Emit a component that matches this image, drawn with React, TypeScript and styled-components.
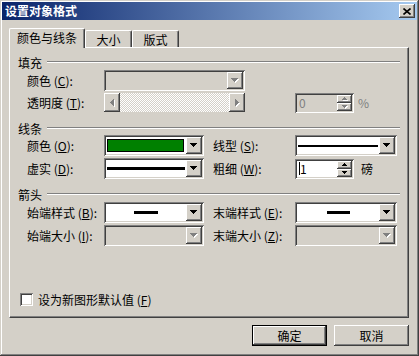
import React from "react";
import styled, { createGlobalStyle, css } from "styled-components";

const FACE = "#d4d0c8";
const SHADOW = "#808080";
const DARK = "#404040";

const GlobalStyle = createGlobalStyle`
  * { box-sizing: border-box; }
  html, body { margin: 0; padding: 0; background: ${FACE}; }
  body {
    font-family: "Noto Sans CJK SC", "Liberation Sans", sans-serif;
    font-size: 12px;
    color: #000;
  }
  u { text-underline-offset: 1px; }
`;

const raised = css`
  box-shadow: inset -1px -1px ${DARK}, inset 1px 1px #fff,
    inset -2px -2px ${SHADOW}, inset 2px 2px ${FACE};
`;

const sunken = css`
  box-shadow: inset 1px 1px ${SHADOW}, inset -1px -1px #fff,
    inset 2px 2px ${DARK}, inset -2px -2px ${FACE};
`;

const Window = styled.div`
  width: 419px;
  height: 356px;
  padding: 2px;
  display: flex;
  flex-direction: column;
  background: ${FACE};
  box-shadow: inset -1px -1px ${DARK}, inset 1px 1px ${FACE},
    inset -2px -2px ${SHADOW}, inset 2px 2px #fff;
`;

const TitleBar = styled.div`
  height: 18px;
  display: flex;
  align-items: center;
  justify-content: space-between;
  padding: 0 2px 0 3px;
  background: linear-gradient(to right, #0a246a, #a6caf0);
  color: #fff;
  font-weight: bold;
  line-height: 18px;
`;

const CloseButton = styled.div`
  width: 16px;
  height: 14px;
  display: flex;
  align-items: center;
  justify-content: center;
  background: ${FACE};
  ${raised};
`;

const Body = styled.div`
  flex: 1;
  display: flex;
  flex-direction: column;
  padding: 8px 8px 0 7px;
`;

const TabRow = styled.div`
  height: 19px;
  display: flex;
  align-items: flex-end;
  position: relative;
  z-index: 1;
`;

const Tab = styled.div<{ $active?: boolean; $w: number }>`
  width: ${(p) => p.$w}px;
  height: ${(p) => (p.$active ? 20 : 17)}px;
  margin-bottom: ${(p) => (p.$active ? -1 : 0)}px;
  display: flex;
  align-items: center;
  justify-content: center;
  padding-bottom: ${(p) => (p.$active ? 2 : 0)}px;
  background: ${FACE};
  border-top: 1px solid #fff;
  border-left: 1px solid #fff;
  border-right: 1px solid ${DARK};
  border-radius: 2px 2px 0 0;
  box-shadow: inset -1px 0 ${SHADOW};
`;

const Panel = styled.div`
  height: 271px;
  display: flex;
  flex-direction: column;
  padding: 8px 8px 11px 8px;
  border-top: 1px solid #fff;
  border-left: 1px solid #fff;
  border-right: 1px solid ${DARK};
  border-bottom: 1px solid ${DARK};
  box-shadow: inset -1px -1px ${SHADOW};
`;

const GroupHeader = styled.div<{ $top: number }>`
  height: 12px;
  margin-top: ${(p) => p.$top}px;
  display: flex;
  align-items: center;
  gap: 5px;
`;

const Etch = styled.div`
  flex: 1;
  height: 2px;
  border-top: 1px solid ${SHADOW};
  border-bottom: 1px solid #fff;
`;

const Row = styled.div<{ $top: number }>`
  height: 21px;
  margin-top: ${(p) => p.$top}px;
  padding-left: 9px;
  display: flex;
  align-items: center;
`;

const Label = styled.div<{ $w: number; $gap?: number }>`
  width: ${(p) => p.$w}px;
  margin-left: ${(p) => p.$gap ?? 0}px;
  flex: none;
  white-space: nowrap;
`;

const Combo = styled.div<{ $w: number; $disabled?: boolean }>`
  width: ${(p) => p.$w}px;
  height: 21px;
  flex: none;
  display: flex;
  padding: 2px;
  background: ${(p) => (p.$disabled ? FACE : "#fff")};
  ${sunken};
`;

const ComboField = styled.div`
  flex: 1;
  display: flex;
  align-items: center;
  justify-content: center;
  padding: 0 1px;
`;

const DropButton = styled.div`
  width: 16px;
  flex: none;
  display: flex;
  align-items: center;
  justify-content: center;
  background: ${FACE};
  ${raised};
`;

const Swatch = styled.div<{ $color: string }>`
  align-self: stretch;
  flex: 1;
  margin: 2px 1px 2px 0;
  background: ${(p) => p.$color};
  border: 1px solid #000;
`;

const LineSample = styled.div<{ $w?: number; $thick: number }>`
  width: ${(p) => (p.$w ? `${p.$w}px` : "100%")};
  height: ${(p) => p.$thick}px;
  background: #000;
`;

const ScrollBar = styled.div<{ $w: number }>`
  width: ${(p) => p.$w}px;
  height: 19px;
  flex: none;
  display: flex;
  justify-content: space-between;
  background: repeating-conic-gradient(#fff 0 25%, ${FACE} 0 50%) 0 0 / 2px
    2px;
`;

const ScrollButton = styled.div`
  width: 16px;
  display: flex;
  align-items: center;
  justify-content: center;
  background: ${FACE};
  ${raised};
`;

const Spin = styled.div<{ $disabled?: boolean; $gap?: number }>`
  width: 59px;
  height: 20px;
  flex: none;
  margin-left: ${(p) => p.$gap ?? 0}px;
  display: flex;
  padding: 2px;
  background: ${(p) => (p.$disabled ? FACE : "#fff")};
  ${sunken};
`;

const SpinText = styled.div<{ $disabled?: boolean }>`
  flex: 1;
  display: flex;
  align-items: center;
  padding-left: 2px;
  color: ${(p) => (p.$disabled ? SHADOW : "#000")};
`;

const Caret = styled.span`
  width: 1px;
  height: 13px;
  background: #000;
`;

const SpinButtons = styled.div`
  width: 15px;
  display: flex;
  flex-direction: column;
`;

const SpinButton = styled.div`
  flex: 1;
  display: flex;
  align-items: center;
  justify-content: center;
  background: ${FACE};
  ${raised};
`;

const Unit = styled.span<{ $gap: number; $disabled?: boolean }>`
  margin-left: ${(p) => p.$gap}px;
  color: ${(p) => (p.$disabled ? SHADOW : "#000")};
`;

const CheckRow = styled.label`
  margin-top: auto;
  height: 13px;
  padding-left: 2px;
  display: flex;
  align-items: center;
  gap: 5px;
`;

const CheckBox = styled.span`
  width: 13px;
  height: 13px;
  background: #fff;
  ${sunken};
`;

const ButtonRow = styled.div`
  margin-top: 7px;
  display: flex;
  justify-content: flex-end;
  gap: 7px;
`;

const Button = styled.button<{ $default?: boolean }>`
  width: 75px;
  height: 21px;
  padding: 0;
  font: inherit;
  color: #000;
  background: ${FACE};
  border: ${(p) => (p.$default ? "1px solid #000" : "none")};
  ${raised};
`;

type Dir = "up" | "down" | "left" | "right";

function Arrow({
  dir,
  size = 7,
  disabled,
}: {
  dir: Dir;
  size?: number;
  disabled?: boolean;
}) {
  const n = Math.ceil(size / 2);
  const horizontal = dir === "left" || dir === "right";
  const w = horizontal ? n : size;
  const h = horizontal ? size : n;
  const rect = (i: number) => {
    const len = size - 2 * i;
    switch (dir) {
      case "down":
        return { x: i, y: i, width: len, height: 1 };
      case "up":
        return { x: i, y: n - 1 - i, width: len, height: 1 };
      case "right":
        return { x: i, y: i, width: 1, height: len };
      default:
        return { x: n - 1 - i, y: i, width: 1, height: len };
    }
  };
  const rows = Array.from({ length: n }, (_, i) => rect(i));
  return (
    <svg width={w + 1} height={h + 1} shapeRendering="crispEdges">
      {disabled &&
        rows.map((r, i) => (
          <rect key={`s${i}`} {...r} x={r.x + 1} y={r.y + 1} fill="#fff" />
        ))}
      {rows.map((r, i) => (
        <rect key={i} {...r} fill={disabled ? SHADOW : "#000"} />
      ))}
    </svg>
  );
}

function Dropdown({
  w,
  disabled,
  children,
}: {
  w: number;
  disabled?: boolean;
  children?: React.ReactNode;
}) {
  return (
    <Combo $w={w} $disabled={disabled}>
      <ComboField>{children}</ComboField>
      <DropButton>
        <Arrow dir="down" disabled={disabled} />
      </DropButton>
    </Combo>
  );
}

function Spinner({
  disabled,
  gap,
  children,
}: {
  disabled?: boolean;
  gap?: number;
  children: React.ReactNode;
}) {
  return (
    <Spin $disabled={disabled} $gap={gap}>
      <SpinText $disabled={disabled}>{children}</SpinText>
      <SpinButtons>
        <SpinButton>
          <Arrow dir="up" size={5} disabled={disabled} />
        </SpinButton>
        <SpinButton>
          <Arrow dir="down" size={5} disabled={disabled} />
        </SpinButton>
      </SpinButtons>
    </Spin>
  );
}

export default function App() {
  return (
    <>
      <GlobalStyle />
      <Window>
        <TitleBar>
          <span>设置对象格式</span>
          <CloseButton>
            <svg width="8" height="7">
              <path d="M0.5 0.5l7 6M7.5 0.5l-7 6" stroke="#000" strokeWidth="1.6" />
            </svg>
          </CloseButton>
        </TitleBar>
        <Body>
          <TabRow>
            <Tab $active $w={76}>
              颜色与线条
            </Tab>
            <Tab $w={47}>大小</Tab>
            <Tab $w={47}>版式</Tab>
          </TabRow>
          <Panel>
            <GroupHeader $top={0}>
              <span>填充</span>
              <Etch />
            </GroupHeader>
            <Row $top={2}>
              <Label $w={77}>
                颜色 (<u>C</u>):
              </Label>
              <Dropdown w={141} disabled />
            </Row>
            <Row $top={1}>
              <Label $w={77}>
                透明度 (<u>T</u>):
              </Label>
              <ScrollBar $w={141}>
                <ScrollButton>
                  <Arrow dir="left" disabled />
                </ScrollButton>
                <ScrollButton>
                  <Arrow dir="right" disabled />
                </ScrollButton>
              </ScrollBar>
              <Spinner disabled gap={50}>
                0
              </Spinner>
              <Unit $gap={4} $disabled>
                %
              </Unit>
            </Row>

            <GroupHeader $top={9}>
              <span>线条</span>
              <Etch />
            </GroupHeader>
            <Row $top={1}>
              <Label $w={77}>
                颜色 (<u>O</u>):
              </Label>
              <Dropdown w={100}>
                <Swatch $color="#008000" />
              </Dropdown>
              <Label $w={82} $gap={9}>
                线型 (<u>S</u>):
              </Label>
              <Dropdown w={102}>
                <LineSample $thick={2} />
              </Dropdown>
            </Row>
            <Row $top={2}>
              <Label $w={77}>
                虚实 (<u>D</u>):
              </Label>
              <Dropdown w={100}>
                <LineSample $thick={3} />
              </Dropdown>
              <Label $w={82} $gap={9}>
                粗细 (<u>W</u>):
              </Label>
              <Spinner>
                <Caret />1
              </Spinner>
              <Unit $gap={7}>磅</Unit>
            </Row>

            <GroupHeader $top={9}>
              <span>箭头</span>
              <Etch />
            </GroupHeader>
            <Row $top={2}>
              <Label $w={77}>
                始端样式 (<u>B</u>):
              </Label>
              <Dropdown w={100}>
                <LineSample $w={24} $thick={3} />
              </Dropdown>
              <Label $w={82} $gap={9}>
                末端样式 (<u>E</u>):
              </Label>
              <Dropdown w={102}>
                <LineSample $w={23} $thick={3} />
              </Dropdown>
            </Row>
            <Row $top={2}>
              <Label $w={77}>
                始端大小 (<u>I</u>):
              </Label>
              <Dropdown w={100} disabled />
              <Label $w={82} $gap={9}>
                末端大小 (<u>Z</u>):
              </Label>
              <Dropdown w={102} disabled />
            </Row>

            <CheckRow>
              <CheckBox />
              <span>
                设为新图形默认值 (<u>F</u>)
              </span>
            </CheckRow>
          </Panel>
          <ButtonRow>
            <Button $default>确定</Button>
            <Button>取消</Button>
          </ButtonRow>
        </Body>
      </Window>
    </>
  );
}
